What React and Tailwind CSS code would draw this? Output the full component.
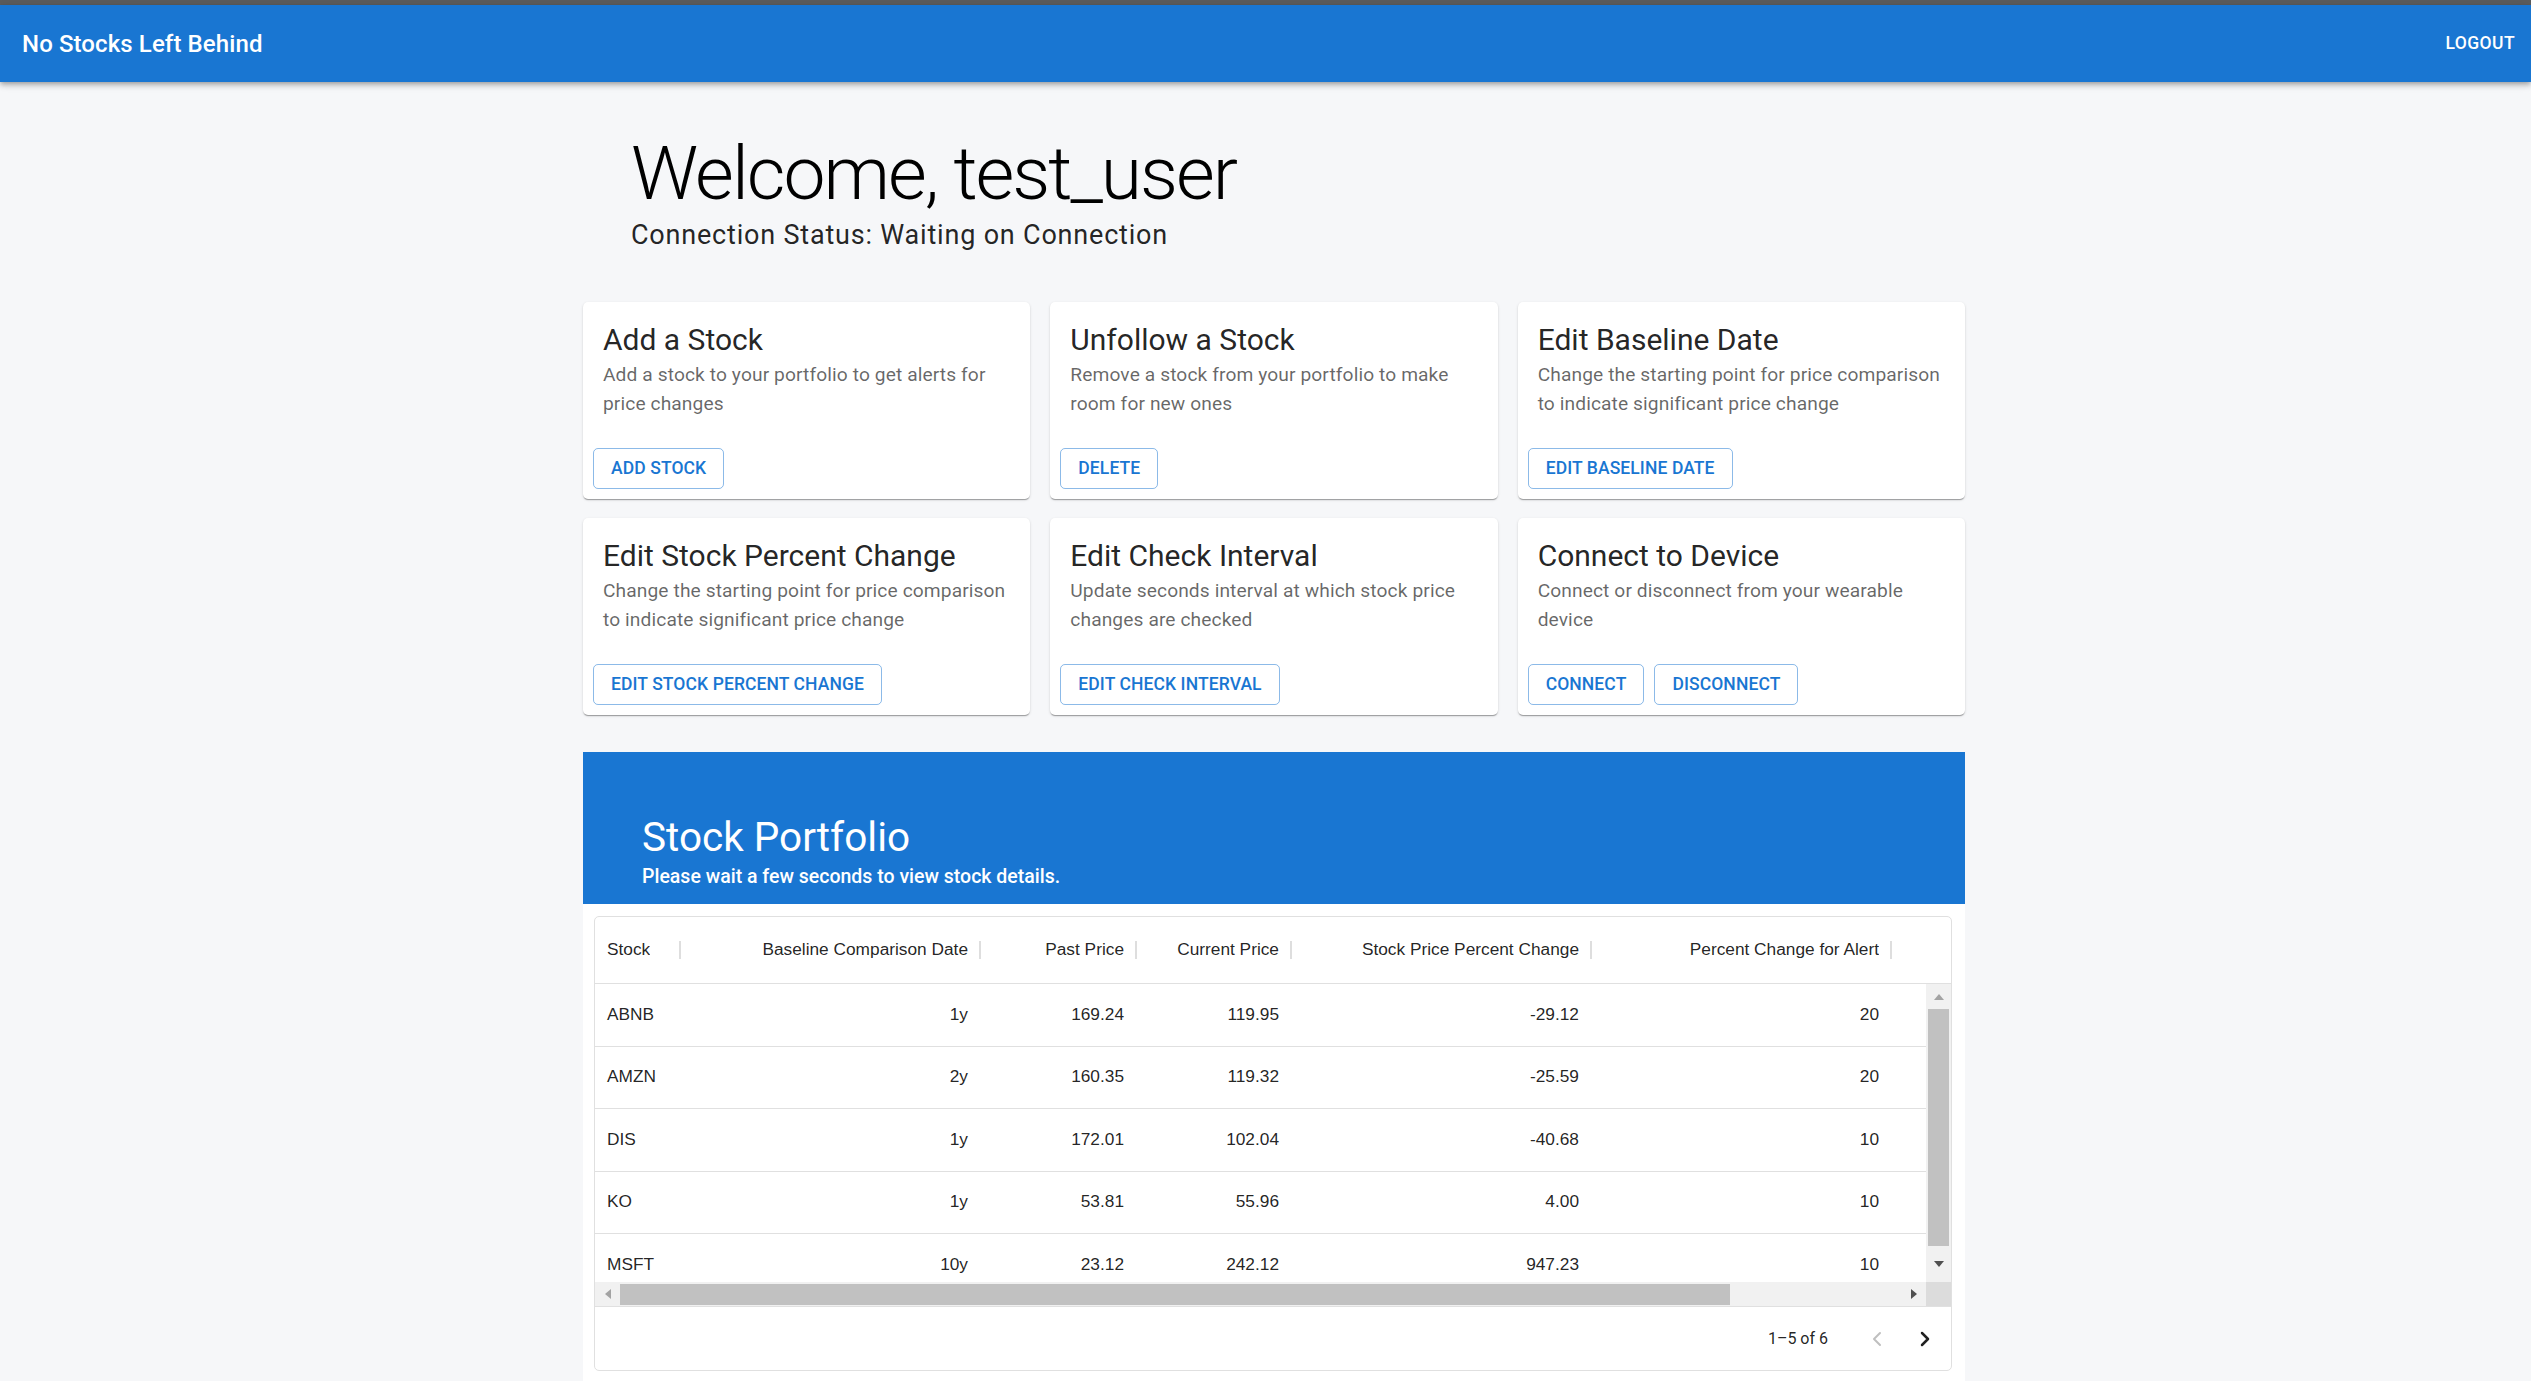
import { ChevronLeft, ChevronRight } from 'lucide-react'

const ACTIONS = [
  {
    title: 'Add a Stock',
    text: 'Add a stock to your portfolio to get alerts for price changes',
    buttons: ['Add Stock'],
  },
  {
    title: 'Unfollow a Stock',
    text: 'Remove a stock from your portfolio to make room for new ones',
    buttons: ['Delete'],
  },
  {
    title: 'Edit Baseline Date',
    text: 'Change the starting point for price comparison to indicate significant price change',
    buttons: ['Edit Baseline Date'],
  },
  {
    title: 'Edit Stock Percent Change',
    text: 'Change the starting point for price comparison to indicate significant price change',
    buttons: ['Edit Stock Percent Change'],
  },
  {
    title: 'Edit Check Interval',
    text: 'Update seconds interval at which stock price changes are checked',
    buttons: ['Edit Check Interval'],
  },
  {
    title: 'Connect to Device',
    text: 'Connect or disconnect from your wearable device',
    buttons: ['Connect', 'Disconnect'],
  },
]

// column widths taken from the grid header separators
const COLUMNS = [
  { label: 'Stock', key: 'symbol', width: 'w-[85px]', align: 'text-left' },
  { label: 'Baseline Comparison Date', key: 'date', width: 'w-[300px]', align: 'text-right' },
  { label: 'Past Price', key: 'past', width: 'w-[156px]', align: 'text-right' },
  { label: 'Current Price', key: 'current', width: 'w-[155px]', align: 'text-right' },
  { label: 'Stock Price Percent Change', key: 'change', width: 'w-[300px]', align: 'text-right' },
  { label: 'Percent Change for Alert', key: 'alert', width: 'w-[300px]', align: 'text-right' },
]

const STOCKS = [
  { symbol: 'ABNB', date: '1y', past: '169.24', current: '119.95', change: '-29.12', alert: '20' },
  { symbol: 'AMZN', date: '2y', past: '160.35', current: '119.32', change: '-25.59', alert: '20' },
  { symbol: 'DIS', date: '1y', past: '172.01', current: '102.04', change: '-40.68', alert: '10' },
  { symbol: 'KO', date: '1y', past: '53.81', current: '55.96', change: '4.00', alert: '10' },
  { symbol: 'MSFT', date: '10y', past: '23.12', current: '242.12', change: '947.23', alert: '10' },
]

function ActionCard({ card }) {
  return (
    <div className="flex flex-col rounded-[5px] bg-white shadow-[0_2px_1px_-1px_rgba(0,0,0,0.2),0_1px_1px_0_rgba(0,0,0,0.14),0_1px_3px_0_rgba(0,0,0,0.12)]">
      <div className="pl-[20px] pr-[14px] pt-[18px] pb-[30px]">
        <h5 className="text-[30px] leading-[40px] text-black/[0.87]">{card.title}</h5>
        <p className="h-[58px] text-[19.2px] leading-[29px] tracking-[0.1px] text-black/60">{card.text}</p>
      </div>
      <div className="flex gap-[10px] px-[10px] pb-[10px]">
        {card.buttons.map((b) => (
          <button
            key={b}
            type="button"
            className="h-[41px] rounded-[5px] border border-[rgba(25,118,210,0.5)] px-[17px] text-[17.5px] font-medium uppercase tracking-[0.1px] text-[#1976d2]"
          >
            {b}
          </button>
        ))}
      </div>
    </div>
  )
}

function Arrow({ dir, dark }) {
  const pts = {
    up: '0,6 5,0 10,6',
    down: '0,0 10,0 5,6',
    left: '6,0 6,10 0,5',
    right: '0,0 6,5 0,10',
  }[dir]
  const vertical = dir === 'up' || dir === 'down'
  return (
    <svg width={vertical ? 10 : 6} height={vertical ? 6 : 10} viewBox={vertical ? '0 0 10 6' : '0 0 6 10'}>
      <polygon points={pts} fill={dark ? '#505050' : '#a3a3a3'} />
    </svg>
  )
}

function StockGrid() {
  return (
    <div className="overflow-hidden rounded-[5px] border border-[#e0e0e0] font-['Liberation_Sans',Arial,sans-serif] text-[17.3px] text-black/[0.87]">
      {/* header */}
      <div className="flex h-[67px] border-b border-[#e0e0e0]">
        {COLUMNS.map((c) => (
          <div key={c.key} className={`relative flex shrink-0 items-center px-[12px] ${c.width} ${c.align === 'text-right' ? 'justify-end' : ''}`}>
            <span className="truncate">{c.label}</span>
            <span className="absolute right-[-1px] top-1/2 h-[18px] w-[2px] -translate-y-1/2 bg-[#dedede]" />
          </div>
        ))}
      </div>

      {/* body + vertical scrollbar */}
      <div className="flex h-[298px]">
        <div className="flex-1 overflow-hidden">
          {STOCKS.map((s) => (
            <div key={s.symbol} className="flex h-[62.5px] shrink-0 border-b border-[#e0e0e0]">
              {COLUMNS.map((c) => (
                <div key={c.key} className={`flex shrink-0 items-center px-[12px] ${c.width} ${c.align === 'text-right' ? 'justify-end' : ''}`}>
                  {s[c.key]}
                </div>
              ))}
            </div>
          ))}
        </div>
        <div className="flex w-[25px] flex-col items-center bg-[#f1f1f1]">
          <div className="flex h-[25px] items-center justify-center">
            <Arrow dir="up" />
          </div>
          <div className="h-[237px] w-[21px] bg-[#c1c1c1]" />
          <div className="flex flex-1 items-center justify-center">
            <Arrow dir="down" dark />
          </div>
        </div>
      </div>

      {/* horizontal scrollbar */}
      <div className="flex h-[25px] border-b border-[#e0e0e0]">
        <div className="flex flex-1 items-center bg-[#f1f1f1]">
          <div className="flex w-[25px] justify-center">
            <Arrow dir="left" />
          </div>
          <div className="h-[21px] w-[1110px] bg-[#c1c1c1]" />
          <div className="flex-1" />
          <div className="flex w-[25px] justify-center">
            <Arrow dir="right" dark />
          </div>
        </div>
        <div className="w-[25px] bg-[#dcdcdc]" />
      </div>

      {/* footer */}
      <div className="flex h-[63px] items-center justify-end pr-[2px] font-['Roboto',Arial,sans-serif]">
        <span className="mr-[25px] text-[16px] text-black/[0.87]">1–5 of 6</span>
        <button type="button" className="flex h-[48px] w-[48px] items-center justify-center text-black/25">
          <ChevronLeft size={24} strokeWidth={2} />
        </button>
        <button type="button" className="flex h-[48px] w-[48px] items-center justify-center text-black/[0.87]">
          <ChevronRight size={24} strokeWidth={2.5} />
        </button>
      </div>
    </div>
  )
}

export default function App() {
  return (
    <div className="min-h-screen bg-[#f6f7f9] font-['Roboto','Helvetica','Arial',sans-serif]">
      <div className="h-[5px] bg-[#5c5c5c]" />
      <header className="relative z-10 flex h-[77px] items-center justify-between bg-[#1976d2] pl-[22px] pr-[16px] shadow-[0_2px_4px_-1px_rgba(0,0,0,0.2),0_4px_5px_0_rgba(0,0,0,0.14),0_1px_10px_0_rgba(0,0,0,0.12)]">
        <h1 className="text-[24px] font-medium tracking-[0.1px] text-white">No Stocks Left Behind</h1>
        <button type="button" className="text-[17.5px] font-medium uppercase tracking-[0.4px] text-white">
          Logout
        </button>
      </header>

      <div className="flex justify-center pl-[17px]">
        <main className="w-[1382px]">
          <section className="pl-[48px] pt-[46px]">
            <h2 className="text-[75px] font-light leading-[90px] tracking-[-2px] text-black">Welcome, test_user</h2>
            <p className="text-[27px] leading-[34px] tracking-[0.8px] text-black/[0.87]">Connection Status: Waiting on Connection</p>
          </section>

          <div className="mt-[50px] grid grid-cols-3 gap-x-[20px] gap-y-[19px]">
            {ACTIONS.map((card) => (
              <ActionCard key={card.title} card={card} />
            ))}
          </div>

          <section className="mt-[37px]">
            <div className="flex h-[152px] flex-col justify-end bg-[#1976d2] px-[59px] pb-[13px] text-white">
              <h3 className="text-[40.5px] leading-[48px]">Stock Portfolio</h3>
              <p className="mt-[2px] text-[19.5px] font-medium leading-[28px]">Please wait a few seconds to view stock details.</p>
            </div>
            <div className="bg-white pl-[11px] pr-[13px] pt-[12px] pb-[10px]">
              <StockGrid />
            </div>
          </section>
        </main>
      </div>
    </div>
  )
}
